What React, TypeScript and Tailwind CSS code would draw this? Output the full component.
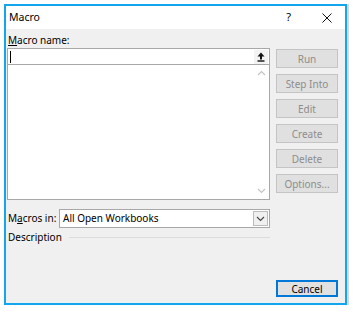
import React from "react";

const font = "font-['Segoe_UI','Noto_Sans',sans-serif]";

function SideButton({ label, primary }: { label: string; primary?: boolean }) {
  return (
    <button
      className={
        primary
          ? "flex h-[17px] w-[62px] items-center justify-center border-2 border-[#0078d7] bg-[#e1e1e1] text-[10px] leading-none text-black"
          : "flex h-[19px] w-[62px] items-center justify-center border border-[#c4c4c4] bg-[#e0e0e0] text-[10px] leading-none text-[#8d8d8d]"
      }
    >
      {label}
    </button>
  );
}

function Chevron({ dir, className }: { dir: "up" | "down"; className: string }) {
  return (
    <svg width="9" height="6" viewBox="0 0 9 6" className={className}>
      <path
        d={dir === "up" ? "M1 5 L4.5 1.5 L8 5" : "M1 1 L4.5 4.5 L8 1"}
        fill="none"
        stroke="currentColor"
        strokeWidth="1.1"
      />
    </svg>
  );
}

export default function App() {
  return (
    <div className={`h-[313px] w-[353px] bg-white pl-[4px] pt-[4px] ${font}`}>
      <div className="flex h-[301px] w-[343px] flex-col border-2 border-[#12a6ee] shadow-[2px_0_0_#d8d8d8]">
        {/* title bar */}
        <div className="flex h-[23px] shrink-0 items-center bg-white pl-[3px] text-[10px] text-black">
          <span className="text-[10.5px]">Macro</span>
          <span className="ml-auto mr-[2px] text-[11px]">?</span>
          <svg width="10" height="10" viewBox="0 0 10 10" className="ml-[29px] mr-[13px]">
            <path d="M0.5 0.5 L9.5 9.5 M9.5 0.5 L0.5 9.5" stroke="#111" strokeWidth="1" />
          </svg>
        </div>

        {/* body */}
        <div className="flex flex-1 bg-[#f0f0f0] pl-[1px] pr-[7px]">
          <div className="flex w-[263px] flex-col">
            <div className="mt-[3px] h-[16px] pl-[1px] text-[10px] leading-[16px] text-black">
              <span className="underline underline-offset-[1px]">M</span>acro name:
            </div>
            <div className="flex h-[17px] items-center border border-[#a8a8a8] bg-white">
              <span className="ml-[2px] h-[12px] w-px bg-black" />
              <div className="ml-auto mr-[1px] flex h-[14px] w-[14px] items-center justify-center bg-[#f3f3f3]">
                <svg width="8" height="10" viewBox="0 0 8 10">
                  <path d="M4 0.5 L7.5 4.5 L5 4.5 L5 7.5 L3 7.5 L3 4.5 L0.5 4.5 Z" fill="#111" />
                  <rect x="0.5" y="8.3" width="7" height="1.4" fill="#111" />
                </svg>
              </div>
            </div>
            <div className="flex h-[135px] border border-t-0 border-[#a8a8a8] bg-white">
              <div className="flex-1" />
              <div className="flex w-[16px] flex-col items-center justify-between py-[5px]">
                <Chevron dir="up" className="text-[#c3c3c3]" />
                <Chevron dir="down" className="text-[#c3c3c3]" />
              </div>
            </div>
            <div className="mt-[9px] flex h-[19px] items-center">
              <span className="w-[52px] shrink-0 whitespace-nowrap pl-[1px] text-[10px] text-black">
                M<span className="underline underline-offset-[1px]">a</span>cros in:
              </span>
              <div className="flex h-[19px] flex-1 items-center border border-[#a8a8a8] bg-white">
                <span className="pl-[3px] text-[10px] text-black">All Open Workbooks</span>
                <div className="ml-auto mr-px flex h-[15px] w-[15px] items-center justify-center border border-[#bcbcbc] bg-[#f0f0f0]">
                  <Chevron dir="down" className="text-[#444]" />
                </div>
              </div>
            </div>
            <div className="mt-[1px] flex h-[16px] items-center">
              <span className="pl-[1px] text-[10px] text-black">Description</span>
              <span className="ml-[7px] h-px flex-1 bg-[#dcdcdc]" />
            </div>
          </div>

          <div className="ml-[6px] flex flex-col gap-[6px] pt-[20px]">
            <SideButton label="Run" />
            <SideButton label="Step Into" />
            <SideButton label="Edit" />
            <SideButton label="Create" />
            <SideButton label="Delete" />
            <SideButton label="Options..." />
            <div className="mt-auto mb-[6px]">
              <SideButton label="Cancel" primary />
            </div>
          </div>
        </div>
      </div>
    </div>
  );
}
